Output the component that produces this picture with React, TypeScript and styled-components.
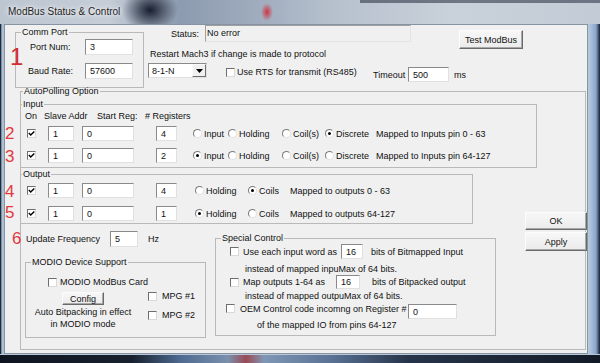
import React from "react";
import styled, { createGlobalStyle, css } from "styled-components";

const FONT = `"Liberation Sans", Arial, sans-serif`;

const GlobalStyle = createGlobalStyle`
  html, body { margin: 0; padding: 0; }
  body { background: #1b2436; font-family: ${FONT}; }
  * { box-sizing: border-box; }
`;

type Sp = { $ml?: number; $mt?: number };
const sp = css<Sp>`
  margin-left: ${(p) => p.$ml ?? 0}px;
  margin-top: ${(p) => p.$mt ?? 0}px;
`;

const Window = styled.div`
  width: 600px;
  height: 363px;
  display: flex;
  flex-direction: column;
  overflow: hidden;
  font-family: ${FONT};
  font-size: 9px;
  line-height: 12px;
  color: #111;
`;

const TitleBar = styled.div`
  height: 24px;
  flex-shrink: 0;
  display: flex;
  align-items: center;
  padding-left: 8px;
  background:
    linear-gradient(rgba(35, 44, 58, 0.55), rgba(35, 44, 58, 0.55)) 360px 0 / 240px 3px no-repeat,
    radial-gradient(ellipse 6px 9px at 267px 12px, rgba(210, 45, 60, 0.95), rgba(210, 45, 60, 0) 100%),
    radial-gradient(ellipse 28px 22px at 150px 10px, rgba(18, 25, 42, 0.97), rgba(18, 25, 42, 0) 100%),
    linear-gradient(90deg, #bcc6d1 0%, #c5cdd7 18%, #8d9bb0 30%, #9eabbd 42%, #b6c0cd 55%, #c9d1da 75%, #c3ccd6 100%);
`;

const TitleText = styled.span`
  font-family: ${FONT};
  font-size: 10px;
  color: #1d1d1d;
  text-shadow: 0 0 6px #fff, 0 0 3px rgba(255, 255, 255, 0.9);
`;

const Middle = styled.div`
  display: flex;
  height: 330px;
  flex-shrink: 0;
`;

const FrameLeft = styled.div`
  width: 4px;
  background: linear-gradient(90deg, #1f2a3a 0 1px, #7d93ad 1px 2px, #aebfd2 2px);
`;

const FrameRight = styled.div`
  width: 12px;
  background: linear-gradient(90deg, #b8cadf 0, #a3bad6 4px, #8aa5c8 8px, #4b6284 10px, #161d29 12px);
`;

const FrameBottom = styled.div`
  height: 9px;
  flex-shrink: 0;
  background:
    linear-gradient(180deg, #b9c7d6 0 1px, rgba(0, 0, 0, 0) 1px),
    linear-gradient(90deg, #0f1520 0%, #17202e 22%, #4e6a90 30%, #7a90ad 38%, #9a4a55 41%, #7f97b5 44%, #5a7396 55%, #26344a 68%, #121a26 100%);
`;

const Client = styled.div`
  width: 584px;
  height: 330px;
  flex-shrink: 0;
  background: #f0f0f0;
  border: 1px solid #8593a3;
  display: flex;
  flex-direction: column;
`;

const TopSection = styled.div`
  display: flex;
  align-items: flex-start;
`;

const Group = styled.fieldset<Sp & { $w: number; $h?: number }>`
  margin: 0;
  ${sp}
  padding: 0;
  width: ${(p) => p.$w}px;
  ${(p) => (p.$h ? `height: ${p.$h}px;` : "")}
  border: 1px solid #b9b9b9;
  min-inline-size: 0;
  flex-shrink: 0;
  display: flex;
  flex-direction: column;
`;

const Legend = styled.legend<{ $ml: number }>`
  padding: 0 1px;
  margin-left: ${(p) => p.$ml}px;
  line-height: 12px;
  font-size: 9px;
  white-space: nowrap;
`;

const Text = styled.span<Sp & { $w?: number }>`
  ${sp}
  flex-shrink: 0;
  white-space: nowrap;
  ${(p) => (p.$w ? `width: ${p.$w}px;` : "")}
`;

const Line = styled.div<Sp>`
  ${sp}
  height: 12px;
  white-space: nowrap;
`;

const Mark = styled.span<{ $l: number; $t: number; $big?: boolean }>`
  position: absolute;
  left: ${(p) => p.$l}px;
  top: ${(p) => p.$t}px;
  font-family: ${FONT};
  font-size: ${(p) => (p.$big ? 24 : 17)}px;
  line-height: ${(p) => (p.$big ? 24 : 17)}px;
  color: ${(p) => (p.$big ? "#d42c2f" : "#e3383d")};
  pointer-events: none;
`;

const Field = styled.div<Sp & { $w: number; $h?: number }>`
  ${sp}
  flex-shrink: 0;
  width: ${(p) => p.$w}px;
  height: ${(p) => p.$h ?? 15}px;
  background: #fff;
  border: 1px solid;
  border-color: #8a8a8a #e0e0e0 #e0e0e0 #8a8a8a;
  padding-left: 4px;
  display: flex;
  align-items: center;
  white-space: nowrap;
`;

const BoxWrap = styled.span<Sp>`
  ${sp}
  flex-shrink: 0;
  width: 9px;
  height: 9px;
  background: #fff;
  border: 1px solid;
  border-color: #6e6e6e #d9d9d9 #d9d9d9 #6e6e6e;
  display: inline-flex;
  align-items: center;
  justify-content: center;
`;

const Check: React.FC<Sp & { on?: boolean }> = ({ on, ...rest }) => (
  <BoxWrap {...rest}>
    {on && (
      <svg width="7" height="7" viewBox="0 0 7 7">
        <path d="M0.8 3.1 L2.7 5.1 L6.3 1.4" stroke="#000" strokeWidth="1.4" fill="none" />
      </svg>
    )}
  </BoxWrap>
);

const Radio = styled.span<{ $on?: boolean }>`
  flex-shrink: 0;
  width: 9px;
  height: 9px;
  border-radius: 50%;
  background: #fff;
  border: 1px solid;
  border-color: #7a7a7a #e2e2e2 #e2e2e2 #7a7a7a;
  position: relative;
  ${(p) =>
    p.$on &&
    css`
      &::after {
        content: "";
        position: absolute;
        left: 2px;
        top: 2px;
        width: 3px;
        height: 3px;
        border-radius: 50%;
        background: #000;
      }
    `}
`;

const Opt = styled.span<Sp & { $w: number }>`
  ${sp}
  flex-shrink: 0;
  width: ${(p) => p.$w}px;
  display: inline-flex;
  align-items: center;
  gap: 2px;
  white-space: nowrap;
`;

const Btn = styled.div<Sp & { $w: number; $h: number }>`
  ${sp}
  flex-shrink: 0;
  width: ${(p) => p.$w}px;
  height: ${(p) => p.$h}px;
  display: flex;
  align-items: center;
  justify-content: center;
  background: linear-gradient(#f7f7f7, #ebebeb);
  border: 1px solid;
  border-color: #fcfcfc #6a6a6a #6a6a6a #fcfcfc;
  box-shadow: inset -1px -1px 0 #a8a8a8;
  white-space: nowrap;
`;

const Combo = styled.div<Sp>`
  ${sp}
  flex-shrink: 0;
  width: 59px;
  height: 15px;
  background: #fff;
  border: 1px solid;
  border-color: #8a8a8a #e0e0e0 #e0e0e0 #8a8a8a;
  display: flex;
  align-items: center;
  justify-content: space-between;
  padding-left: 3px;
`;

const ComboArrow = styled.span`
  width: 14px;
  height: 13px;
  background: #f0f0f0;
  border: 1px solid;
  border-color: #fafafa #707070 #707070 #fafafa;
  display: flex;
  align-items: center;
  justify-content: center;
`;

const MidCol = styled.div`
  display: flex;
  flex-direction: column;
  margin-left: 4px;
`;

const StatusRow = styled.div`
  display: flex;
  align-items: flex-start;
  height: 17px;
  padding-left: 23px;
`;

const StatusLabel = styled.span`
  width: 34px;
  height: 17px;
  display: flex;
  align-items: center;
  flex-shrink: 0;
`;

const StatusBox = styled.div`
  width: 206px;
  height: 17px;
  flex-shrink: 0;
  border: 1px solid;
  border-color: #a0a0a0 #e4e4e4 #e4e4e4 #a0a0a0;
  padding: 1px 1px 0;
`;

const ProtoRow = styled.div`
  display: flex;
  align-items: flex-start;
  margin-top: 3px;
  height: 20px;
`;

const CheckItem = styled.span<Sp & { $w?: number; $gap?: number }>`
  ${sp}
  flex-shrink: 0;
  display: inline-flex;
  align-items: center;
  gap: ${(p) => p.$gap ?? 2}px;
  height: 12px;
  white-space: nowrap;
  ${(p) => (p.$w ? `width: ${p.$w}px;` : "")}
`;

const InlineGroup = styled.div<Sp>`
  ${sp}
  display: flex;
  align-items: center;
  flex-shrink: 0;
`;

const PortRow = styled.div<Sp & { $pl: number }>`
  ${sp}
  position: relative;
  display: flex;
  align-items: center;
  height: 16px;
  padding-left: ${(p) => p.$pl}px;
`;

const HeadRow = styled.div`
  display: flex;
  height: 12px;
  padding-left: 4px;
`;

const IORow = styled.div<Sp>`
  ${sp}
  position: relative;
  display: flex;
  align-items: center;
  height: 15px;
  padding-left: 6px;
`;

const LowerRow = styled.div`
  display: flex;
  align-items: flex-start;
`;

const LeftCol = styled.div`
  width: 476px;
  margin-left: -1px;
  flex-shrink: 0;
  display: flex;
  flex-direction: column;
`;

const ButtonCol = styled.div`
  margin-left: 29px;
  margin-top: 44px;
  display: flex;
  flex-direction: column;
  flex-shrink: 0;
`;

const BottomArea = styled.div`
  display: flex;
  align-items: flex-start;
`;

const BottomLeft = styled.div`
  width: 186px;
  flex-shrink: 0;
  display: flex;
  flex-direction: column;
`;

const FreqRow = styled.div`
  position: relative;
  display: flex;
  align-items: center;
  height: 16px;
  margin-top: 7px;
  padding-left: 6px;
`;

const ModioRow = styled.div`
  display: flex;
  align-items: center;
  height: 12px;
  margin-top: 8px;
  padding-left: 22px;
`;

const ModioBody = styled.div`
  display: flex;
  margin-top: 2px;
`;

const ModioLeft = styled.div`
  width: 114px;
  display: flex;
  flex-direction: column;
  align-items: center;
  flex-shrink: 0;
`;

const ModioRight = styled.div`
  margin-left: 8px;
  display: flex;
  flex-direction: column;
`;

const SpRow = styled.div<Sp & { $h: number; $pl: number; $top?: boolean }>`
  ${sp}
  display: flex;
  align-items: ${(p) => (p.$top ? "flex-start" : "center")};
  height: ${(p) => p.$h}px;
  padding-left: ${(p) => p.$pl}px;
`;

const inOpts: [string, number][] = [
  ["Input", 35],
  ["Holding", 54],
  ["Coil(s)", 43],
  ["Discrete", 51],
];
const outOpts: [string, number][] = [
  ["Holding", 53],
  ["Coils", 42],
];

const inputRows = [
  { n: "2", mt: 4, mk: -1, regs: "4", sel: 3, map: "Mapped to Inputs pin 0 - 63" },
  { n: "3", mt: 7, mk: 0, regs: "2", sel: 0, map: "Mapped to Inputs pin 64-127" },
];
const outRows = [
  { n: "4", mt: 3, mk: 0, regs: "4", sel: 1, map: "Mapped to outputs 0 - 63" },
  { n: "5", mt: 8, mk: -2, regs: "1", sel: 0, map: "Mapped to outputs 64-127" },
];

type RowData = { n: string; mt: number; mk: number; regs: string; sel: number; map: string };

const PollRow: React.FC<{ r: RowData; opts: [string, number][]; optMl: number }> = ({ r, opts, optMl }) => (
  <IORow $mt={r.mt}>
    <Mark $l={-16} $t={r.mk}>{r.n}</Mark>
    <Check on />
    <Field $w={26} $ml={12}>1</Field>
    <Field $w={52} $ml={8}>0</Field>
    <Field $w={21} $ml={22}>{r.regs}</Field>
    {opts.map(([label, w], i) => (
      <Opt key={label} $w={w} $ml={i === 0 ? optMl : 0}>
        <Radio $on={i === r.sel} />
        {label}
      </Opt>
    ))}
    <Text>{r.map}</Text>
  </IORow>
);

export default function App() {
  return (
    <>
      <GlobalStyle />
      <Window>
        <TitleBar>
          <TitleText>ModBus Status &amp; Control</TitleText>
        </TitleBar>
        <Middle>
          <FrameLeft />
          <Client>
            <TopSection>
              <Group $w={129} $h={62} $ml={10} $mt={1}>
                <Legend $ml={5}>Comm Port</Legend>
                <PortRow $pl={14} $mt={1}>
                  <Mark $big $l={-6} $t={6}>1</Mark>
                  <Text $w={55}>Port Num:</Text>
                  <Field $w={48} $h={16}>3</Field>
                </PortRow>
                <PortRow $pl={12} $mt={8}>
                  <Text $w={57}>Baud Rate:</Text>
                  <Field $w={48} $h={16}>57600</Field>
                </PortRow>
              </Group>
              <MidCol>
                <StatusRow>
                  <StatusLabel>Status:</StatusLabel>
                  <StatusBox>No error</StatusBox>
                  <Btn $w={64} $h={19} $ml={48} $mt={5}>Test ModBus</Btn>
                </StatusRow>
                <Line $ml={2} $mt={6}>Restart Mach3 if change is made to protocol</Line>
                <ProtoRow>
                  <Combo>
                    8-1-N
                    <ComboArrow>
                      <svg width="7" height="4" viewBox="0 0 7 4">
                        <path d="M0 0H7L3.5 4Z" fill="#000" />
                      </svg>
                    </ComboArrow>
                  </Combo>
                  <CheckItem $w={147} $ml={19} $mt={3}>
                    <Check />
                    Use RTS for transmit (RS485)
                  </CheckItem>
                  <InlineGroup $mt={4}>
                    <Text $w={35}>Timeout</Text>
                    <Field $w={41}>500</Field>
                    <Text $ml={5}>ms</Text>
                  </InlineGroup>
                </ProtoRow>
              </MidCol>
            </TopSection>

            <Group $w={566} $h={265} $ml={15} $mt={-3}>
              <Legend $ml={2}>AutoPolling Option</Legend>
              <Group $w={517} $h={70} $ml={-1} $mt={1}>
                <Legend $ml={1}>Input</Legend>
                <HeadRow>
                  <Text $w={19}>On</Text>
                  <Text $w={53}>Slave Addr</Text>
                  <Text $w={48}>Start Reg:</Text>
                  <Text># Registers</Text>
                </HeadRow>
                {inputRows.map((r) => (
                  <PollRow key={r.n} r={r} opts={inOpts} optMl={16} />
                ))}
              </Group>
              <LowerRow>
                <LeftCol>
                  <Group $w={453} $h={56}>
                    <Legend $ml={1}>Output</Legend>
                    {outRows.map((r) => (
                      <PollRow key={r.n} r={r} opts={outOpts} optMl={18} />
                    ))}
                  </Group>
                  <BottomArea>
                    <BottomLeft>
                      <FreqRow>
                        <Mark $l={-8} $t={-1}>6</Mark>
                        <Text $w={84}>Update Frequency</Text>
                        <Field $w={28} $h={16}>5</Field>
                        <Text $ml={10}>Hz</Text>
                      </FreqRow>
                      <Group $w={181} $h={82} $ml={5} $mt={9}>
                        <Legend $ml={5}>MODIO Device Support</Legend>
                        <ModioRow>
                          <CheckItem $gap={3}>
                            <Check />
                            MODIO ModBus Card
                          </CheckItem>
                        </ModioRow>
                        <ModioBody>
                          <ModioLeft>
                            <Btn $w={42} $h={13} $mt={2}>Config</Btn>
                            <Line $mt={1}>Auto Bitpacking in effect</Line>
                            <Line>in MODIO mode</Line>
                          </ModioLeft>
                          <ModioRight>
                            <CheckItem $gap={5}>
                              <Check />
                              MPG #1
                            </CheckItem>
                            <CheckItem $gap={5} $mt={7}>
                              <Check />
                              MPG #2
                            </CheckItem>
                          </ModioRight>
                        </ModioBody>
                      </Group>
                    </BottomLeft>
                    <Group $w={281} $h={104} $ml={9} $mt={8}>
                      <Legend $ml={5}>Special Control</Legend>
                      <SpRow $h={15} $pl={14}>
                        <Check />
                        <Text $w={98} $ml={4}>Use each input word as</Text>
                        <Field $w={22}>16</Field>
                        <Text $ml={8}>bits of Bitmapped Input</Text>
                      </SpRow>
                      <Line $ml={29} $mt={4}>instead of mapped inpuMax of 64 bits.</Line>
                      <SpRow $h={14} $pl={14}>
                        <Check />
                        <Text $w={93} $ml={4}>Map outputs 1-64 as</Text>
                        <Field $w={24} $h={14}>16</Field>
                        <Text $ml={12}>bits of Bitpacked output</Text>
                      </SpRow>
                      <Line $ml={29} $mt={1}>instead of mapped outpuMax of 64 bits.</Line>
                      <SpRow $h={16} $pl={10} $mt={1} $top>
                        <Check $mt={1} />
                        <Text $w={168} $ml={5}>OEM Control code incomng on Register #</Text>
                        <Field $w={49} $mt={1}>0</Field>
                      </SpRow>
                      <Line $ml={41}>of the mapped IO from pins 64-127</Line>
                    </Group>
                  </BottomArea>
                </LeftCol>
                <ButtonCol>
                  <Btn $w={62} $h={18}>OK</Btn>
                  <Btn $w={62} $h={19} $mt={2}>Apply</Btn>
                </ButtonCol>
              </LowerRow>
            </Group>
          </Client>
          <FrameRight />
        </Middle>
        <FrameBottom />
      </Window>
    </>
  );
}
